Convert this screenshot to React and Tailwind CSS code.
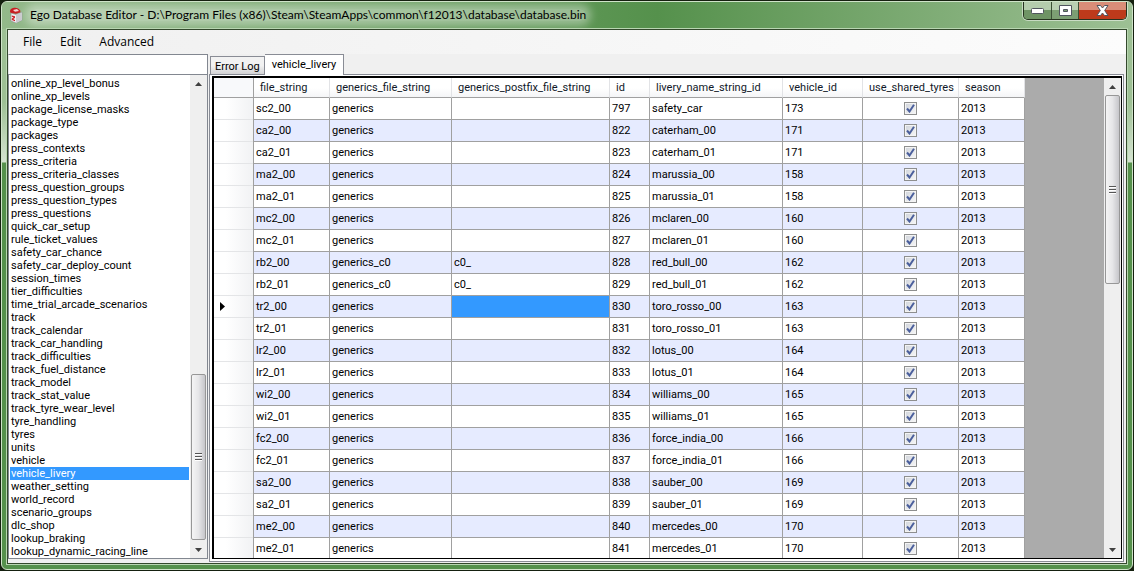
// App.jsx: Ego Database Editor main window (table list on the left, grid on the right).
import React from "react";

const TABLES = [
  "online_xp_level_bonus", "online_xp_levels", "package_license_masks", "package_type",
  "packages", "press_contexts", "press_criteria", "press_criteria_classes",
  "press_question_groups", "press_question_types", "press_questions", "quick_car_setup",
  "rule_ticket_values", "safety_car_chance", "safety_car_deploy_count", "session_times",
  "tier_difficulties", "time_trial_arcade_scenarios", "track", "track_calendar",
  "track_car_handling", "track_difficulties", "track_fuel_distance", "track_model",
  "track_stat_value", "track_tyre_wear_level", "tyre_handling", "tyres", "units",
  "vehicle", "vehicle_livery", "weather_setting", "world_record", "scenario_groups",
  "dlc_shop", "lookup_braking", "lookup_dynamic_racing_line",
];

const COLUMNS = [
  ["file_string", "w-[76px]"],
  ["generics_file_string", "w-[122px]"],
  ["generics_postfix_file_string", "w-[158px]"],
  ["id", "w-[40px]"],
  ["livery_name_string_id", "w-[133px]"],
  ["vehicle_id", "w-[80px]"],
  ["use_shared_tyres", "w-[96px]"],
  ["season", "w-[66px]"],
];

// file, generics, postfix, id, livery, vehicle
const ROWS = [
  ["sc2_00", "generics", "", 797, "safety_car", 173],
  ["ca2_00", "generics", "", 822, "caterham_00", 171],
  ["ca2_01", "generics", "", 823, "caterham_01", 171],
  ["ma2_00", "generics", "", 824, "marussia_00", 158],
  ["ma2_01", "generics", "", 825, "marussia_01", 158],
  ["mc2_00", "generics", "", 826, "mclaren_00", 160],
  ["mc2_01", "generics", "", 827, "mclaren_01", 160],
  ["rb2_00", "generics_c0", "c0_", 828, "red_bull_00", 162],
  ["rb2_01", "generics_c0", "c0_", 829, "red_bull_01", 162],
  ["tr2_00", "generics", "", 830, "toro_rosso_00", 163],
  ["tr2_01", "generics", "", 831, "toro_rosso_01", 163],
  ["lr2_00", "generics", "", 832, "lotus_00", 164],
  ["lr2_01", "generics", "", 833, "lotus_01", 164],
  ["wi2_00", "generics", "", 834, "williams_00", 165],
  ["wi2_01", "generics", "", 835, "williams_01", 165],
  ["fc2_00", "generics", "", 836, "force_india_00", 166],
  ["fc2_01", "generics", "", 837, "force_india_01", 166],
  ["sa2_00", "generics", "", 838, "sauber_00", 169],
  ["sa2_01", "generics", "", 839, "sauber_01", 169],
  ["me2_00", "generics", "", 840, "mercedes_00", 170],
  ["me2_01", "generics", "", 841, "mercedes_01", 170],
];

const CURRENT_ROW = 9;

const AppIcon = () => (
  <svg width="16" height="16" viewBox="0 0 16 16" aria-hidden="true">
    <path d="M3 6L8 7.5L14 5.5V13L8 16L3 14Z" fill="#efeff1" stroke="#8b8b90" strokeWidth="0.6" />
    <path d="M8 7.5L14 5.5V13L8 16Z" fill="#c9c9ce" />
    <path d="M2 4.5Q2 1.5 6 0.8Q10 0.2 12.5 4L12 5.5L8 6.8L2.5 5.8Z" fill="#c81e23" />
    <path d="M5 3L9 2L11 4L7 4.8Z" fill="#f3d3d3" />
    <path d="M3.8 8.5L7 9.3V11L5.2 12L7 13V14.2L3.8 13V11.5L5.6 10.5L3.8 9.8Z" fill="#d2232a" />
  </svg>
);

const WindowButtons = () => (
  <div className="flex h-[18px] rounded-b-[5px] border border-t-0 border-[#26331f] shadow-[0_0_0_1px_#ffffff80] overflow-hidden">
    <button aria-label="Minimize" className="w-[28px] flex items-center justify-center border-r border-[#3b4f35] bg-linear-to-b from-[#b4ccad] from-50% to-[#6f9465] to-50%">
      <svg width="13" height="6" viewBox="0 0 13 6"><rect x="0.5" y="0.5" width="12" height="5" rx="1" fill="#fff" stroke="#50555e" /></svg>
    </button>
    <button aria-label="Maximize" className="w-[27px] flex items-center justify-center border-r border-[#3b4f35] bg-linear-to-b from-[#b9cfb2] from-50% to-[#7c9f73] to-50%">
      <svg width="13" height="11" viewBox="0 0 13 11">
        <path d="M0.5 0.5H12.5V10.5H0.5Z M4.5 4.5V6.5H8.5V4.5Z" fill="#fff" fillRule="evenodd" stroke="#50555e" />
      </svg>
    </button>
    <button aria-label="Close" className="w-[47px] flex items-center justify-center bg-linear-to-b from-[#d98d78] from-50% to-[#bd3a1b] to-50%">
      <svg width="13" height="11" viewBox="0 0 13 11">
        <path d="M1 0.5H4.5L6.5 3L8.5 0.5H12L8.7 5.5L12 10.5H8.5L6.5 8L4.5 10.5H1L4.3 5.5Z" fill="#fff" stroke="#50555e" />
      </svg>
    </button>
  </div>
);

const Arrow = ({ down }) => (
  <button aria-label={down ? "Scroll down" : "Scroll up"} className="h-[17px] shrink-0 flex items-center justify-center">
    <svg width="7" height="4" viewBox="0 0 7 4">
      <path d={down ? "M0 0H7L3.5 4Z" : "M0 4H7L3.5 0Z"} fill="#404040" />
    </svg>
  </button>
);

const ScrollBar = ({ before, thumb, after }) => (
  <div className="w-[17px] shrink-0 flex flex-col bg-[#efefef]">
    <Arrow />
    <div className={`basis-0 ${before}`} />
    <div className={`basis-0 ${thumb} flex flex-col items-center justify-center gap-px mx-px rounded-[2px] border border-[#979797] bg-linear-to-r from-[#f5f5f5] via-[#e6e6e8] to-[#c6c6ca]`}>
      <div className="w-[7px] h-[2px] border-t border-[#555] bg-white" />
      <div className="w-[7px] h-[2px] border-t border-[#555] bg-white" />
      <div className="w-[7px] h-[2px] border-t border-[#555] bg-white" />
    </div>
    <div className={`basis-0 ${after}`} />
    <Arrow down />
  </div>
);

const TitleBar = () => (
  <header className="h-[27px] shrink-0 flex items-start pl-[6px] bg-linear-to-r from-[#93b98a] via-[#55914c] via-58% to-[#9dc094]">
    <div className="flex items-center gap-[6px] h-[26px]">
      <AppIcon />
      <h1 className="font-[Lato,sans-serif] text-[12px] leading-[12px] text-black whitespace-nowrap rounded-full bg-[#ffffff60] shadow-[0_0_8px_5px_#ffffff60]">
        Ego Database Editor - D:\Program Files (x86)\Steam\SteamApps\common\f12013\database\database.bin
      </h1>
    </div>
    <div className="ml-auto mr-[5px]">
      <WindowButtons />
    </div>
  </header>
);

const MenuBar = () => (
  <nav className="h-[24px] shrink-0 flex items-center gap-[18px] pl-[15px] bg-linear-to-r from-[#f0f0f0] to-[#fcfcfc] font-['Open_Sans',sans-serif] text-[12px]">
    <button>File</button>
    <button>Edit</button>
    <button>Advanced</button>
  </nav>
);

const Sidebar = () => (
  <aside className="w-[200px] shrink-0 flex flex-col">
    <input aria-label="Filter tables" className="h-[20px] shrink-0 bg-white border border-b-0 border-[#828790] border-l-[#e3e3e6] px-1 outline-none" />
    <div className="flex-1 min-h-0 flex bg-white border border-[#828790]">
      <ul className="flex-1 min-w-0 pt-[2px] px-px overflow-hidden">
        {TABLES.map((name) => (
          <li key={name}
              className={`h-[13px] leading-[13px] px-px whitespace-nowrap ${name === "vehicle_livery" ? "bg-[#3399ff] text-white" : ""}`}>
            {name}
          </li>
        ))}
      </ul>
      <ScrollBar before="grow-[283]" thumb="grow-[165]" after="grow-[1]" />
    </div>
  </aside>
);

const Tabs = () => (
  <div role="tablist" className="flex items-end h-[20px] shrink-0 pl-px">
    <button role="tab" aria-selected="false"
            className="h-[18px] pt-[2px] px-[4px] border border-b-0 border-[#898c95] bg-linear-to-b from-[#f2f2f2] from-50% to-[#d3d3d5]">
      Error Log
    </button>
    <button role="tab" aria-selected="true"
            className="relative z-10 h-[21px] -mb-px px-[7px] border border-b-0 border-l-0 border-[#898c95] bg-white">
      vehicle_livery
    </button>
  </div>
);

const RowHeader = ({ current }) => (
  <th className="border-r border-[#a0a0a0] p-0 bg-linear-to-r from-white from-30% to-[#f1f2f4]">
    <div className="h-[22px] flex items-center pl-[6px] border-b border-[#e4e5e7]">
      {current && (
        <svg width="5" height="9" viewBox="0 0 5 9"><path d="M0 0L5 4.5L0 9Z" fill="#000" /></svg>
      )}
    </div>
  </th>
);

const Grid = () => (
  <table className="table-fixed w-[811px] h-fit border-separate border-spacing-0 bg-white">
    <colgroup>
      <col className="w-[40px]" />
      {COLUMNS.map(([name, width]) => <col key={name} className={width} />)}
    </colgroup>
    <thead>
      <tr className="h-[20px] bg-linear-to-b from-white from-50% to-[#f3f4f6]">
        <th className="p-0 border-r border-b border-[#a0a0a0] bg-[#f8f9fb]" />
        {COLUMNS.map(([name]) => (
          <th key={name} className="p-0 pt-[2px] pl-[6px] text-left font-normal whitespace-nowrap text-[#101828] border-b border-b-[#a0a0a0] border-r border-r-[#e2e3e6]">
            {name}
          </th>
        ))}
      </tr>
    </thead>
    <tbody>
      {ROWS.map(([file, generics, postfix, id, livery, vehicle], i) => {
        const cell = "p-0 pt-[2px] pl-[2px] border-r border-b border-[#a0a0a0] whitespace-nowrap";
        return (
          <tr key={id} className={`h-[22px] ${i % 2 ? "bg-[#e6ebff]" : "bg-white"}`}>
            <RowHeader current={i === CURRENT_ROW} />
            <td className={cell}>{file}</td>
            <td className={cell}>{generics}</td>
            <td className={`${cell} ${i === CURRENT_ROW ? "bg-[#3399ff]" : ""}`}>{postfix}</td>
            <td className={cell}>{id}</td>
            <td className={cell}>{livery}</td>
            <td className={cell}>{vehicle}</td>
            <td className="p-0 border-r border-b border-[#a0a0a0]">
              <div className="grid place-items-center">
                <input type="checkbox" defaultChecked aria-label={`use_shared_tyres ${id}`}
                       className="col-start-1 row-start-1 appearance-none size-[13px] border border-[#8e8f8f] bg-linear-to-br from-[#cfd3da] to-[#f8f8f8] shadow-[inset_0_0_0_1px_#f4f4f4]" />
                <svg width="9" height="9" viewBox="0 0 9 9" className="col-start-1 row-start-1 pointer-events-none">
                  <path d="M1 4.5L3.5 7.5L8 0.8" fill="none" stroke="#4b5f9c" strokeWidth="2" />
                </svg>
              </div>
            </td>
            <td className={cell}>2013</td>
          </tr>
        );
      })}
    </tbody>
  </table>
);

export default function App() {
  return (
    <div className="h-screen p-px bg-[#15200f] font-[Roboto,Arial,sans-serif] text-[11px] text-black overflow-hidden">
      <div className="h-full flex flex-col rounded-[6px] border border-[#cfe3c9] bg-linear-to-b from-[#9dc094] from-[100px] via-[#d5e3d1] via-[160px] to-[#55914c] to-[161px] overflow-hidden">
        <TitleBar />
        <div className="flex-1 min-h-0 mx-[5px] mb-[5px] flex flex-col border border-[#33492c] shadow-[0_0_0_1px_#b9d6b2] bg-[#f0f0f0]">
          <MenuBar />
          <div className="flex-1 min-h-0 flex gap-px">
            <div className="flex pb-[4px]"><Sidebar /></div>
            <main className="flex-1 min-w-0 flex flex-col pb-px">
              <Tabs />
              <div className="flex-1 min-h-0 pt-px pr-px pb-[2px] pl-[2px] mr-[2px] border border-[#898c95] bg-white flex">
                <div className="flex-1 min-w-0 flex border border-t-2 border-l-2 border-black bg-[#ababab]">
                  <div className="flex-1 min-w-0 overflow-hidden">
                    <Grid />
                  </div>
                  <ScrollBar before="grow-0" thumb="grow-[188]" after="grow-[258]" />
                </div>
              </div>
            </main>
          </div>
        </div>
      </div>
    </div>
  );
}
